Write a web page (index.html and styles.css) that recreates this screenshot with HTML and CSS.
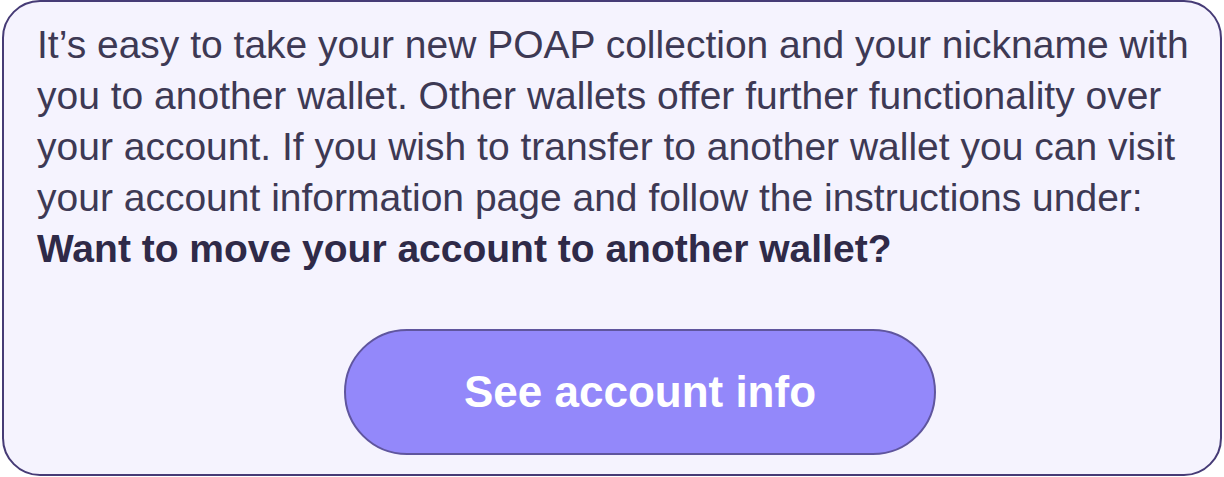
FILE: index.html
```html
<!DOCTYPE html>
<html lang="en">
<head>
<meta charset="utf-8">
<title>Move account</title>
<link rel="stylesheet" href="styles.css">
</head>
<body>
<div class="card">
  <p class="copy">It’s easy to take your new POAP collection and your nickname with you to another wallet. Other wallets offer further functionality over your account. If you wish to transfer to another wallet you can visit your account information page and follow the instructions under: <strong>Want to move your account to another wallet?</strong></p>
  <div class="actions">
    <a class="btn" href="#">See account info</a>
  </div>
</div>
</body>
</html>
```
FILE: styles.css
```css
html, body {
  margin: 0;
  padding: 0;
  background: #ffffff;
}
body {
  padding: 0 2px 0 2px;
  font-family: "Liberation Sans", Arial, sans-serif;
}
.card {
  box-sizing: border-box;
  width: 1220px;
  height: 476px;
  border: 2px solid #463b76;
  border-radius: 38px;
  background: #f5f3fe;
  padding: 17px 20px 0 33px;
}
.copy {
  margin: 0;
  font-size: 39px;
  line-height: 51px;
  color: #3d3954;
}
.copy strong {
  color: #2f2a48;
  font-weight: 700;
}
.actions {
  margin-top: 55px;
  padding-left: 307px;
  display: flex;
}
.btn {
  box-sizing: border-box;
  display: flex;
  align-items: center;
  justify-content: center;
  width: 592px;
  height: 126px;
  border: 2px solid #5f559e;
  border-radius: 63px;
  background: #9388fa;
  color: #ffffff;
  font-weight: 700;
  font-size: 44px;
  text-decoration: none;
}
```
